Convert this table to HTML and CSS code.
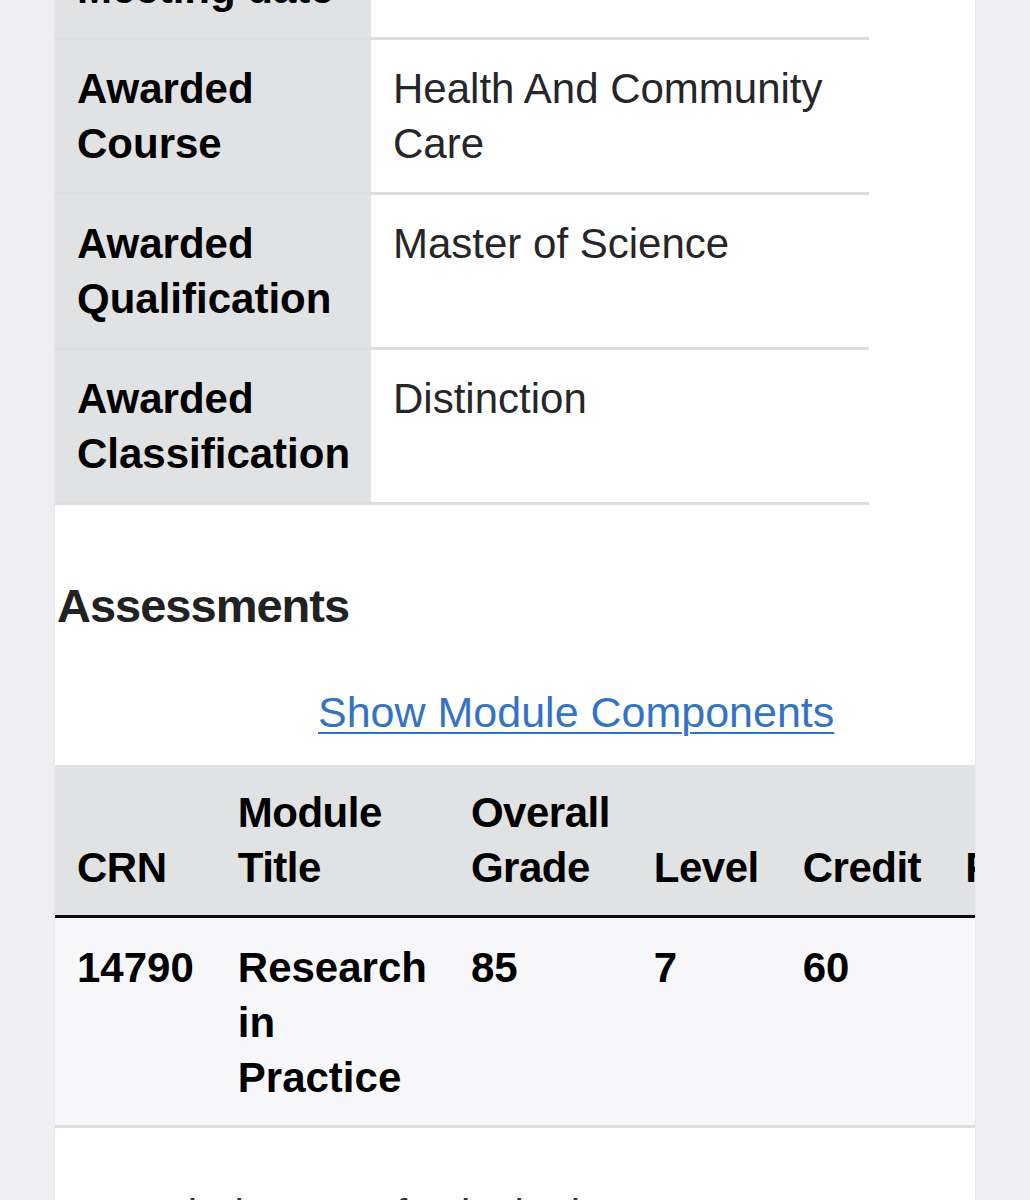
FILE: index.html
```html
<!DOCTYPE html>
<html lang="en">
<head>
<meta charset="utf-8">
<title>Award details</title>
<link rel="stylesheet" href="styles.css">
</head>
<body>
<div class="panel">
  <table class="details">
    <colgroup><col class="col-label"><col class="col-value"></colgroup>
    <tr><th>Meeting date</th><td></td></tr>
    <tr><th>Awarded Course</th><td>Health And Community Care</td></tr>
    <tr><th>Awarded Qualification</th><td>Master of Science</td></tr>
    <tr><th>Awarded Classification</th><td>Distinction</td></tr>
  </table>

  <h2 class="section-title">Assessments</h2>

  <div class="toggle-row"><a href="#" class="toggle-link">Show Module Components</a></div>

  <div class="table-scroll">
    <table class="assessments">
      <thead>
        <tr><th>CRN</th><th>Module Title</th><th>Overall Grade</th><th>Level</th><th>Credit</th><th>Period</th></tr>
      </thead>
      <tbody>
        <tr><td>14790</td><td>Research in Practice</td><td>85</td><td>7</td><td>60</td><td></td></tr>
      </tbody>
    </table>
  </div>

  <p class="footnote">*Rounded Mean of Principal Assessments</p>
</div>
</body>
</html>
```
FILE: styles.css
```css
html {
  background: #efeff1;
}
body {
  margin: 0;
  font-family: "Liberation Sans", Arial, Helvetica, sans-serif;
  color: #1f1f21;
}
.panel {
  margin: -61px 0 0 55px;
  width: 920px;
  background: #ffffff;
  box-shadow: 0 0 2px rgba(0, 0, 0, 0.08);
  padding-bottom: 40px;
  overflow: hidden;
}

/* details table */
.details {
  width: 814px;
  table-layout: fixed;
  border-collapse: separate;
  border-spacing: 0;
  font-size: 42px;
  line-height: 55px;
}
.col-label { width: 316px; }
.details th,
.details td {
  padding: 21px 22px;
  text-align: left;
  vertical-align: top;
  border-bottom: 3px solid #dcdde0;
}
.details tr:first-child th,
.details tr:first-child td {
  padding-top: 22px;
}
.details th {
  background: #e1e2e4;
  font-weight: 700;
  color: #000;
}
.details td {
  background: #ffffff;
  font-weight: 400;
  color: #262628;
}

/* heading */
.section-title {
  margin: 73px 0 0 2px;
  font-size: 47px;
  line-height: 55px;
  letter-spacing: -1px;
  font-weight: 700;
  color: #222;
}

/* toggle */
.toggle-row {
  margin-top: 52px;
  padding-left: 263px;
  font-size: 43px;
  line-height: 55px;
}
.toggle-link {
  color: #3473c4;
  text-decoration: underline;
  text-decoration-thickness: 2px;
  text-underline-offset: 5px;
}

/* assessments table */
.table-scroll {
  margin-top: 25px;
  overflow: hidden;
}
.assessments {
  width: 1px;
  border-collapse: separate;
  border-spacing: 0;
  font-size: 42px;
  line-height: 55px;
  font-weight: 700;
  color: #000;
}
.assessments th {
  padding: 20px 22px;
  text-align: left;
  vertical-align: bottom;
  letter-spacing: -0.5px;
  background: #e1e2e4;
  border-bottom: 3px solid #0b0b0b;
}
.assessments td {
  padding: 22px 22px 20px;
  text-align: left;
  vertical-align: top;
  background: #f7f7f9;
  border-bottom: 3px solid #dcdde0;
}

.footnote {
  margin: 59px 0 0 2px;
  font-size: 42px;
  line-height: 55px;
  color: #333;
}
```
